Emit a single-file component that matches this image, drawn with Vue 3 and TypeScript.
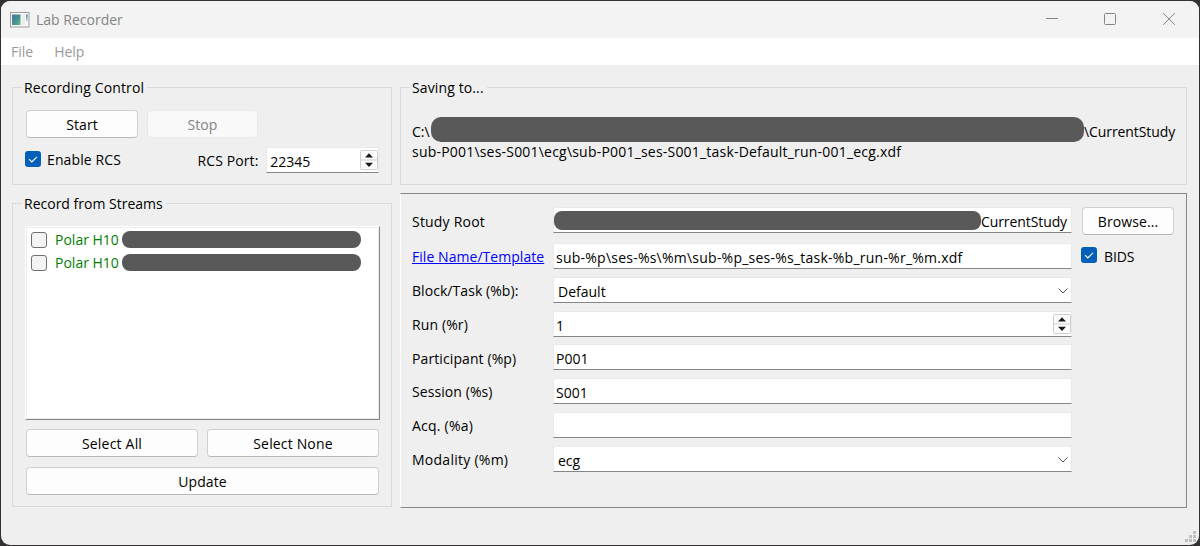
<script setup lang="ts">
import { ref } from 'vue'

interface Field {
  key: string
  label: string
  value: string
  kind: 'text' | 'combo' | 'spin'
}

const streams = ref([
  { id: 1, name: 'Polar H10', checked: false },
  { id: 2, name: 'Polar H10', checked: false },
])

const fields = ref<Field[]>([
  { key: 'block', label: 'Block/Task (%b):', value: 'Default', kind: 'combo' },
  { key: 'run', label: 'Run (%r)', value: '1', kind: 'spin' },
  { key: 'participant', label: 'Participant (%p)', value: 'P001', kind: 'text' },
  { key: 'session', label: 'Session (%s)', value: 'S001', kind: 'text' },
  { key: 'acq', label: 'Acq. (%a)', value: '', kind: 'text' },
  { key: 'modality', label: 'Modality (%m)', value: 'ecg', kind: 'combo' },
])

const template = 'sub-%p\\ses-%s\\%m\\sub-%p_ses-%s_task-%b_run-%r_%m.xdf'
const savePath = 'sub-P001\\ses-S001\\ecg\\sub-P001_ses-S001_task-Default_run-001_ecg.xdf'
</script>

<template>
  <div class="desktop">
    <div class="window">
      <header class="titlebar">
        <svg class="app-icon" width="20" height="16" viewBox="0 0 20 16">
          <defs>
            <linearGradient id="screen" x1="0" y1="0" x2="1" y2="1">
              <stop offset="0" stop-color="#4773a0" />
              <stop offset="0.5" stop-color="#459090" />
              <stop offset="1" stop-color="#62b78b" />
            </linearGradient>
            <linearGradient id="side" x1="0" y1="0" x2="0" y2="1">
              <stop offset="0" stop-color="#5387b8" />
              <stop offset="1" stop-color="#b9e4c4" />
            </linearGradient>
          </defs>
          <rect x="0.5" y="0.5" width="18.5" height="14.5" fill="#f8f8f8" stroke="#9a9fa3" />
          <rect x="2" y="2.5" width="8.5" height="10.5" fill="url(#screen)" />
          <rect x="11.5" y="2.5" width="3.5" height="10.5" fill="#eceeee" />
          <rect x="16" y="2.5" width="1.7" height="7" fill="url(#side)" />
        </svg>
        <span class="title">Lab Recorder</span>
        <svg class="caption-buttons" width="132" height="16" viewBox="0 0 132 16" fill="none" stroke="#858585">
          <path d="M0 7.5H12" />
          <rect x="58.5" y="2.5" width="11" height="11" rx="1" />
          <path d="M117.2 2.2L128.8 13.8M128.8 2.2L117.2 13.8" />
        </svg>
      </header>
      <nav class="menu"><span class="m-file">File</span><span class="m-help">Help</span></nav>

      <main class="content">
        <div class="left">
          <section class="group control">
            <h2 class="legend l-control">Recording Control</h2>
            <div class="row">
              <button class="btn start"><span>Start</span></button>
              <button class="btn stop" disabled><span>Stop</span></button>
            </div>
            <div class="row rcs">
              <span class="check on">
                <svg width="16" height="16" viewBox="0 0 16 16"><path d="M4 8.2L6.8 11L12 5.8" fill="none" stroke="#fff" stroke-width="1.1" /></svg>
              </span>
              <span class="t-enable">Enable RCS</span>
              <span class="t-port">RCS Port:</span>
              <div class="field port">
                <span class="value">22345</span>
                <span class="stepper">
                  <svg width="18" height="20" viewBox="0 0 18 20">
                    <rect x="0.5" y="0.5" width="17" height="19" rx="1" fill="#fcfcfc" stroke="#cfcfcf" />
                    <path d="M0 10H18" stroke="#cfcfcf" />
                    <path d="M5 7.5L9 3.3L13 7.5ZM5 12.8H13L9 17Z" fill="#191919" />
                  </svg>
                </span>
              </div>
            </div>
          </section>

          <section class="group streams">
            <h2 class="legend l-streams">Record from Streams</h2>
            <ul class="list">
              <li v-for="s in streams" :key="s.id">
                <span class="check"></span>
                <span class="stream-name">{{ s.name }}</span>
                <span class="mask"></span>
              </li>
            </ul>
            <div class="row pair">
              <button class="btn"><span class="t-all">Select All</span></button>
              <button class="btn"><span class="t-none">Select None</span></button>
            </div>
            <button class="btn update"><span>Update</span></button>
          </section>
        </div>

        <div class="right">
          <section class="group saving">
            <h2 class="legend l-saving">Saving to...</h2>
            <div class="path-line">
              <span class="drive">C:\</span><span class="mask"></span><span class="study">\CurrentStudy</span>
            </div>
            <div class="path"><span>{{ savePath }}</span></div>
          </section>

          <section class="form">
            <label class="t-root">Study Root</label>
            <div class="field root">
              <span class="mask"></span><span class="study">CurrentStudy</span>
            </div>
            <button class="btn browse"><span>Browse...</span></button>

            <a class="link"><span>File Name/Template</span></a>
            <div class="field"><span class="value t-template">{{ template }}</span></div>
            <div class="bids">
              <span class="check on">
                <svg width="16" height="16" viewBox="0 0 16 16"><path d="M4 8.2L6.8 11L12 5.8" fill="none" stroke="#fff" stroke-width="1.1" /></svg>
              </span>
              <span class="t-bids">BIDS</span>
            </div>

            <template v-for="f in fields" :key="f.key">
              <label><span :class="'t-' + f.key">{{ f.label }}</span></label>
              <div class="field" :class="[f.kind, 'f-' + f.key]">
                <span class="value">{{ f.value }}</span>
                <svg v-if="f.kind === 'combo'" class="chevron" width="10" height="6" viewBox="0 0 10 6">
                  <path d="M0.5 0.5L5 5L9.5 0.5" fill="none" stroke="#555" />
                </svg>
                <span v-if="f.kind === 'spin'" class="stepper">
                  <svg width="18" height="20" viewBox="0 0 18 20">
                    <rect x="0.5" y="0.5" width="17" height="19" rx="1" fill="#fcfcfc" stroke="#cfcfcf" />
                    <path d="M0 10H18" stroke="#cfcfcf" />
                    <path d="M5 7.5L9 3.3L13 7.5ZM5 12.8H13L9 17Z" fill="#191919" />
                  </svg>
                </span>
              </div>
              <i></i>
            </template>
          </section>
        </div>
      </main>
      <svg class="grip" width="11" height="11" viewBox="0 0 11 11" fill="#bfbfbf">
        <path d="M8 0h3v3h-3zM4 4h3v3h-3zM8 4h3v3h-3zM0 8h3v3h-3zM4 8h3v3h-3zM8 8h3v3h-3z" />
      </svg>
    </div>
  </div>
</template>

<style>
body { margin: 0; background: #333; }
</style>

<style scoped>
* { box-sizing: border-box; }
.desktop {
  width: 1200px; height: 546px; padding: 1px; background: #333031; overflow: hidden;
  font: 14px/20px "Open Sans", "Noto Sans", sans-serif; color: #000; white-space: nowrap;
}
.window { position: relative; width: 1198px; height: 544px; border-radius: 9px; background: #efefef; overflow: hidden; }
.titlebar { height: 37px; background: #f3f3f3; display: flex; align-items: center; padding: 0 21px 0 9px; color: #858585; }
.title { margin-left: 6px; }
.caption-buttons { margin-left: auto; margin-top: -1px; }
.menu { height: 27px; background: #fff; display: flex; align-items: center; padding-left: 10px; color: #999; }
.m-help { margin-left: 21px; }
.content { display: grid; grid-template-columns: 380px 787px; column-gap: 8px; padding: 22px 0 0 11px; }
.left, .right { display: flex; flex-direction: column; }
.group { position: relative; border: 1px solid #dadada; }
.legend {
  position: absolute; left: 9px; top: -10px; margin: 0; padding: 0 3px 0 2px; background: #efefef;
  font-size: inherit; font-weight: 400; line-height: 20px;
}
.l-control { letter-spacing: 0.14px; }
.l-saving { letter-spacing: 0.12px; }
.row { display: flex; align-items: center; }
.control { height: 98px; padding: 22px 12px 0 13px; }
.btn {
  height: 28px; padding: 2px 0 0; border: 1px solid #d0d0d0; border-bottom-color: #b9b9b9; border-radius: 4px;
  background: #fdfdfd; font: inherit; letter-spacing: 0.1px; color: #000;
  display: flex; justify-content: center; align-items: center;
}
.start { width: 112px; }
.stop { width: 111px; margin-left: 9px; background: #f9f9f9; border-color: #e8e8e8; color: #838383; }
.rcs { height: 26px; margin-top: 9px; margin-left: -1px; }
.check { width: 16px; height: 16px; flex: none; border: 1px solid #626262; border-radius: 3px; background: #f3f3f3; }
.check.on { border: 0; background: #005fb8; }
.check svg { display: block; }
.rcs .check { margin-top: -2px; }
.t-enable { margin-left: 6px; width: 151px; letter-spacing: 0.12px; }
.t-port { width: 69px; letter-spacing: 0.1px; margin-top: 2px; }
.field {
  position: relative; height: 26px; background: #fff; border: 1px solid #e9e9e9; border-bottom-color: #868686;
  display: flex; align-items: center;
}
.value { margin-left: 2px; margin-top: 3px; }
.port { width: 113px; }
.port .value { margin-left: 3px; }
.stepper { margin-left: auto; height: 20px; }
.stepper svg { display: block; }
.streams { margin-top: 18px; height: 304px; padding: 22px 11px 0 12px; }
.list {
  height: 194px; margin: 0; padding: 3px 0 0 5px; list-style: none; background: #fff;
  border: 1px solid #fff; border-right-color: #828790; border-bottom-color: #828790;
  box-shadow: inset 1px 1px #ececec, inset -1px -1px #ececec;
}
.list li { height: 23px; display: flex; align-items: center; color: #008000; }
.list .check { margin-top: -3px; border-color: #707070; }
.stream-name { margin-left: 8px; width: 67px; margin-top: -3px; }
.mask { background: #595959; flex: none; }
.list .mask { width: 239px; height: 17px; border-radius: 8px; margin-top: -4px; }
.pair { margin: 9px 1px 0; gap: 9px; }
.pair .btn { width: 172px; }
.t-all { letter-spacing: 0.2px; }
.t-none { letter-spacing: 0.16px; }
.update { width: 353px; margin: 10px 1px 0; }
.saving { height: 98px; padding: 29px 0 0 11px; }
.path-line { display: flex; height: 25px; align-items: center; }
.drive { width: 19px; margin-top: 5px; }
.path-line .mask { width: 653px; height: 25px; border-radius: 10px; }
.study { letter-spacing: -0.09px; }
.path-line .study { margin-top: 5px; }
.path { height: 20px; letter-spacing: 0.205px; }
.form {
  margin-top: 8px; height: 315px; padding: 13px 11px 0 11px;
  border: 1px solid #828790; border-left-color: #fff;
  display: grid; grid-template-columns: 141px 519px 93px; grid-template-rows: 28px 26px 26px 26px 25px 26px 26px 26px;
  row-gap: 8px; align-content: start;
}
.form label, .link { align-self: center; margin-top: 2px; }
.link { color: #0000ff; text-decoration: underline; letter-spacing: 0.05px; }
.t-root { letter-spacing: 0.2px; }
.t-block { letter-spacing: 0.06px; }
.t-run { letter-spacing: 0.12px; }
.t-participant { letter-spacing: 0.1px; }
.t-session { letter-spacing: 0.08px; }
.t-acq { letter-spacing: 0.22px; }
.t-modality { letter-spacing: 0.26px; }
.t-template { letter-spacing: 0.235px; }
.f-participant { margin-top: -1px; }
.f-participant .value { margin-top: 4px; }
.root .mask { width: 427px; height: 19px; border-radius: 8px; margin-top: 1px; }
.root .study { margin-top: 3px; }
.browse { width: 92px; margin-left: 10px; }
.bids { display: flex; align-items: center; margin: 0 0 0 9px; gap: 7px; }
.bids .check { margin-top: -2px; }
.t-bids { margin-top: 1px; letter-spacing: -0.1px; }
.combo .value { margin-left: 4px; }
.chevron { margin: 1px 3px 0 auto; }
.grip { position: absolute; right: 3px; bottom: 3px; }
</style>
